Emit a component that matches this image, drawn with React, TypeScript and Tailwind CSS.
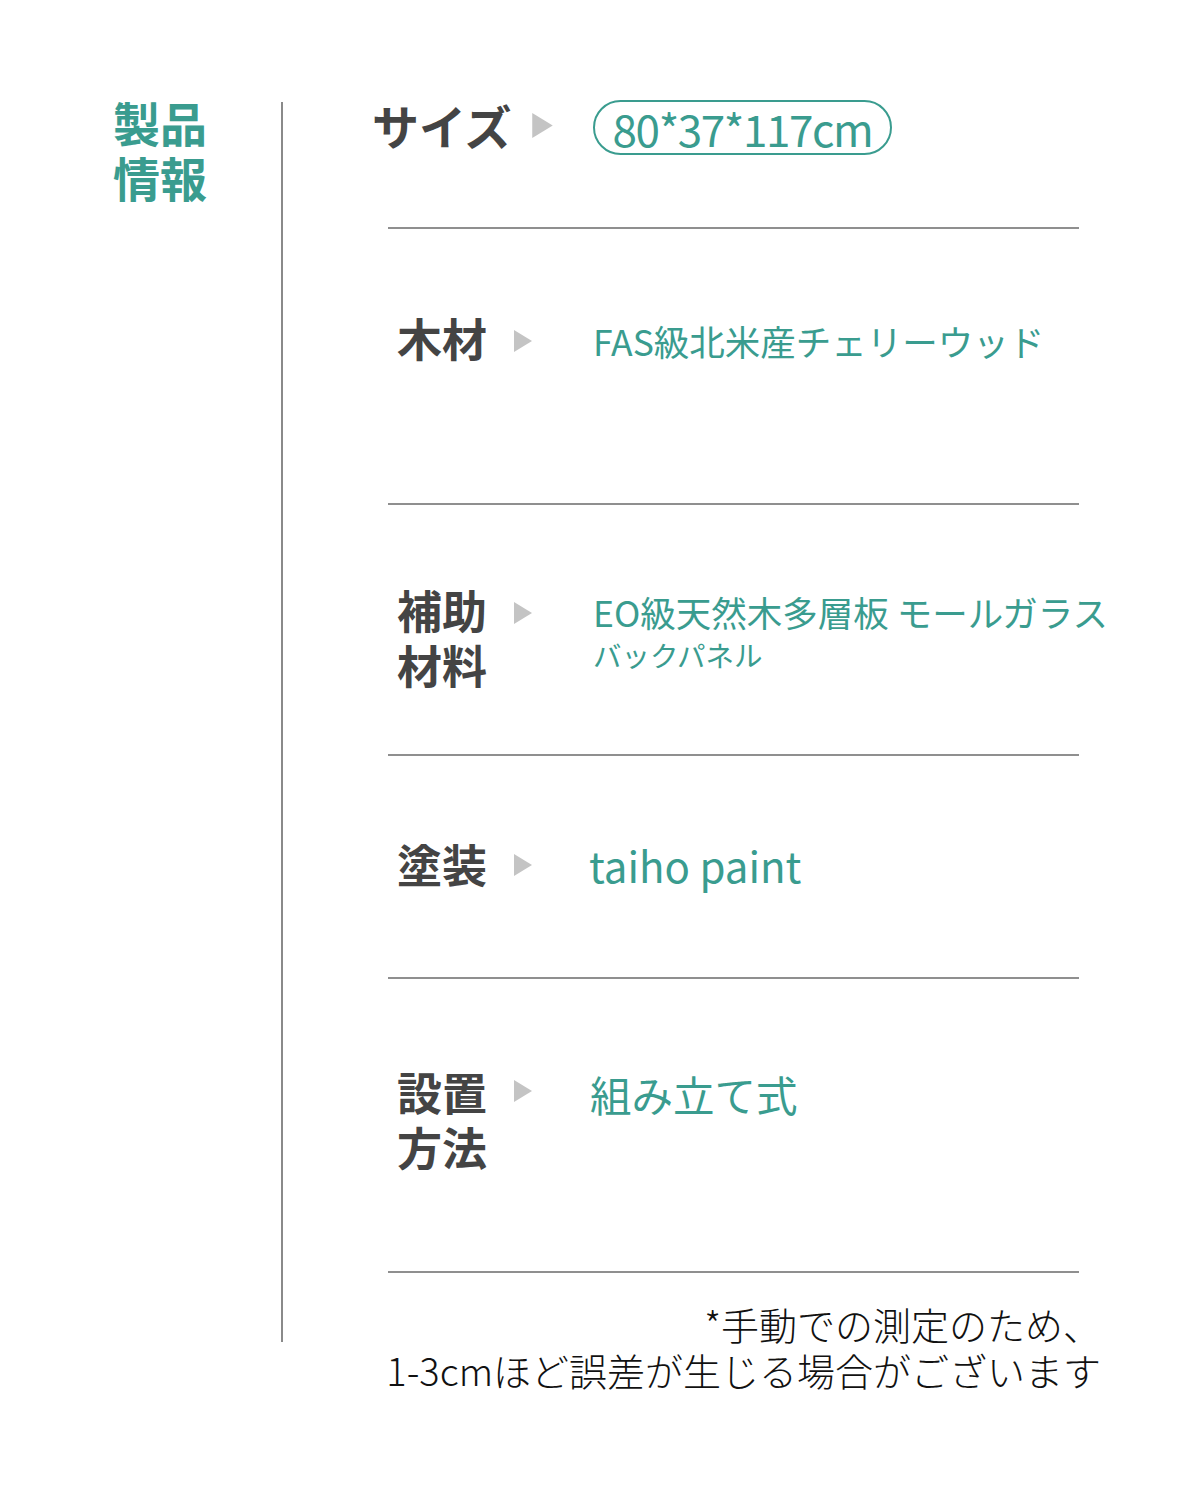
import React from 'react';

const FONT = { fontFamily: '"Noto Sans CJK JP", "Noto Sans", sans-serif' };

const Arrow: React.FC<{ className?: string }> = ({ className }) => (
  <svg className={className} viewBox="0 0 18 22" fill="#c4c4c4">
    <path d="M0 0 L18 11 L0 22 Z" />
  </svg>
);

const Divider: React.FC = () => <div className="ml-[105px] h-[2px] w-[691px] bg-[#8f8f8f]" />;

const Label: React.FC<{ children: React.ReactNode }> = ({ children }) => (
  <div className="ml-[114px] w-[90px] text-[45px] font-bold leading-[55px] text-[#444]">{children}</div>
);

const App: React.FC = () => {
  return (
    <div className="min-h-[1485px] w-[1200px] bg-white" style={FONT}>
      <div className="flex pt-[100px]">
        {/* Left title */}
        <div className="w-[281px] shrink-0">
          <h1 className="ml-[113px] -mt-[6px] text-[47px] font-bold leading-[55px] text-[#3a9c8f]">
            製品
            <br />
            情報
          </h1>
        </div>
        <div className="mt-[2px] h-[1240px] w-[2px] shrink-0 bg-[#8a8a8a]" />

        {/* Spec rows */}
        <div className="flex-1">
          {/* Size */}
          <div className="flex h-[127px] items-start">
            <div className="ml-[89px] -mt-[3px] text-[47px] font-bold leading-[56px] text-[#444]">サイズ</div>
            <Arrow className="ml-[19px] mt-[13px] h-[25px] w-[23px]" />
            <div className="ml-[39px] flex h-[55px] items-center rounded-full border-2 border-[#3a9c8f] px-[18px] text-[44px] leading-none tracking-[-1.4px] text-[#3a9c8f]">
              80*37*117cm
            </div>
          </div>
          <Divider />

          {/* Wood */}
          <div className="flex h-[274px] items-start pt-[81px]">
            <Label>木材</Label>
            <Arrow className="ml-[27px] mt-[20px] h-[22px] w-[18px]" />
            <div className="ml-[61px] mt-[11px] whitespace-nowrap text-[35.5px] leading-[40px] text-[#3a9c8f]">
              FAS級北米産チェリーウッド
            </div>
          </div>
          <Divider />

          {/* Aux material */}
          <div className="flex h-[249px] items-start pt-[77px]">
            <Label>
              補助
              <br />
              材料
            </Label>
            <Arrow className="ml-[27px] mt-[20px] h-[22px] w-[18px]" />
            <div className="ml-[61px] mt-[10px] text-[#3a9c8f]">
              <div className="whitespace-nowrap text-[35.5px] leading-[40px]">EO級天然木多層板 モールガラス</div>
              <div className="mt-[6px] whitespace-nowrap text-[28.5px] leading-[34px]">バックパネル</div>
            </div>
          </div>
          <Divider />

          {/* Coating */}
          <div className="flex h-[221px] items-start pt-[80px]">
            <Label>塗装</Label>
            <Arrow className="ml-[27px] mt-[18px] h-[22px] w-[18px]" />
            <div className="ml-[57px] mt-[3px] text-[42px] leading-[52px] text-[#3a9c8f]">taiho paint</div>
          </div>
          <Divider />

          {/* Installation */}
          <div className="flex h-[292px] items-start pt-[85px]">
            <Label>
              設置
              <br />
              方法
            </Label>
            <Arrow className="ml-[27px] mt-[16px] h-[22px] w-[18px]" />
            <div className="ml-[58px] mt-[4px] text-[41.5px] leading-[52px] text-[#3a9c8f]">組み立て式</div>
          </div>
          <Divider />

          {/* Note */}
          <div className="w-[818px] pt-[28px] text-right text-[38px] font-light leading-[46px] text-[#111]">
            *手動での測定のため、
            <br />
            1-3cmほど誤差が生じる場合がございます
          </div>
        </div>
      </div>
    </div>
  );
};

export default App;
